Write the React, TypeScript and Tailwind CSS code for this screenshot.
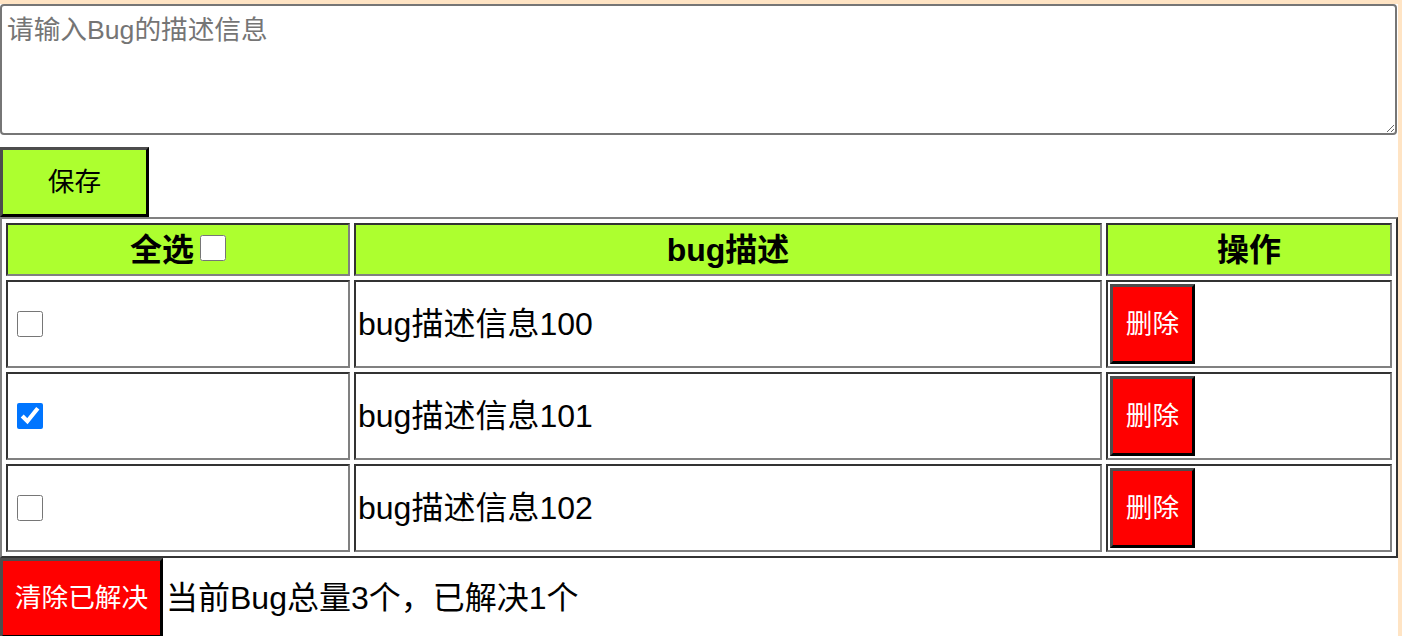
import React from "react";

const rows = [
  { id: 100, checked: false },
  { id: 101, checked: true },
  { id: 102, checked: false },
];

const cellCls =
  "border-2 border-t-[#333333] border-l-[#333333] border-b-[#808080] border-r-[#808080] p-[2px]";

export default function App() {
  return (
    <div
      className="min-h-screen bg-[#ffe4c4] pt-[4px]"
      style={{ fontFamily: '"Liberation Sans", "Noto Sans CJK SC", sans-serif' }}
    >
      <div className="w-[1398px] min-h-[632px] bg-white">
        <textarea
          placeholder="请输入Bug的描述信息"
          className="block w-[1397px] h-[131px] border-2 border-[#767676] rounded-[4px] pl-[5px] pr-[4px] pt-[8px] text-[26.67px] leading-[32px] text-black placeholder:text-[#757575] bg-white outline-none resize"
          style={{ fontFamily: '"Liberation Sans", "Noto Sans CJK SC", sans-serif' }}
        />
        <button className="mt-[12px] block w-[149px] h-[70px] bg-[#adff2f] border-[3px] border-t-[#4d4d4d] border-l-[#4d4d4d] border-r-black border-b-black text-[26.67px] leading-none text-black">
          保存
        </button>
        <table className="w-[1398px] table-fixed border-separate border-spacing-[4px] border-2 border-t-[#808080] border-l-[#808080] border-r-[#333333] border-b-[#333333]">
          <colgroup>
            <col className="w-[344px]" />
            <col className="w-[748px]" />
            <col className="w-[286px]" />
          </colgroup>
          <thead>
            <tr>
              <th className={`${cellCls} bg-[#adff2f]`}>
                <div className="h-[45px] flex items-center justify-center text-[32px] font-bold text-black">
                  <span>全选</span>
                  <input
                    type="checkbox"
                    className="w-[26px] h-[26px] ml-[6px] mt-[-4px]"
                  />
                </div>
              </th>
              <th className={`${cellCls} bg-[#adff2f]`}>
                <div className="h-[45px] flex items-center justify-center text-[32px] font-bold text-black">
                  bug描述
                </div>
              </th>
              <th className={`${cellCls} bg-[#adff2f]`}>
                <div className="h-[45px] flex items-center justify-center text-[32px] font-bold text-black">
                  操作
                </div>
              </th>
            </tr>
          </thead>
          <tbody>
            {rows.map((r) => (
              <tr key={r.id}>
                <td className={cellCls}>
                  <div className="h-[80px] flex items-center">
                    <input
                      type="checkbox"
                      defaultChecked={r.checked}
                      className="w-[26px] h-[26px] ml-[7px]"
                    />
                  </div>
                </td>
                <td className={cellCls}>
                  <div className="h-[80px] flex items-center text-[32px] text-black">
                    bug描述信息{r.id}
                  </div>
                </td>
                <td className={cellCls}>
                  <div className="h-[80px] flex items-center">
                    <button className="w-[85px] h-[80px] bg-[#ff0000] border-[3px] border-t-[#4d4d4d] border-l-[#4d4d4d] border-r-black border-b-black text-white text-[26.67px] leading-none">
                      删除
                    </button>
                  </div>
                </td>
              </tr>
            ))}
          </tbody>
        </table>
        <div className="flex items-center">
          <button className="w-[163px] h-[80px] bg-[#ff0000] border-[3px] border-t-[#4d4d4d] border-l-[#4d4d4d] border-r-black border-b-black text-white text-[26.67px] leading-none">
            清除已解决
          </button>
          <span className="ml-[3px] text-[32px] text-black">当前Bug总量3个，已解决1个</span>
        </div>
      </div>
    </div>
  );
}
